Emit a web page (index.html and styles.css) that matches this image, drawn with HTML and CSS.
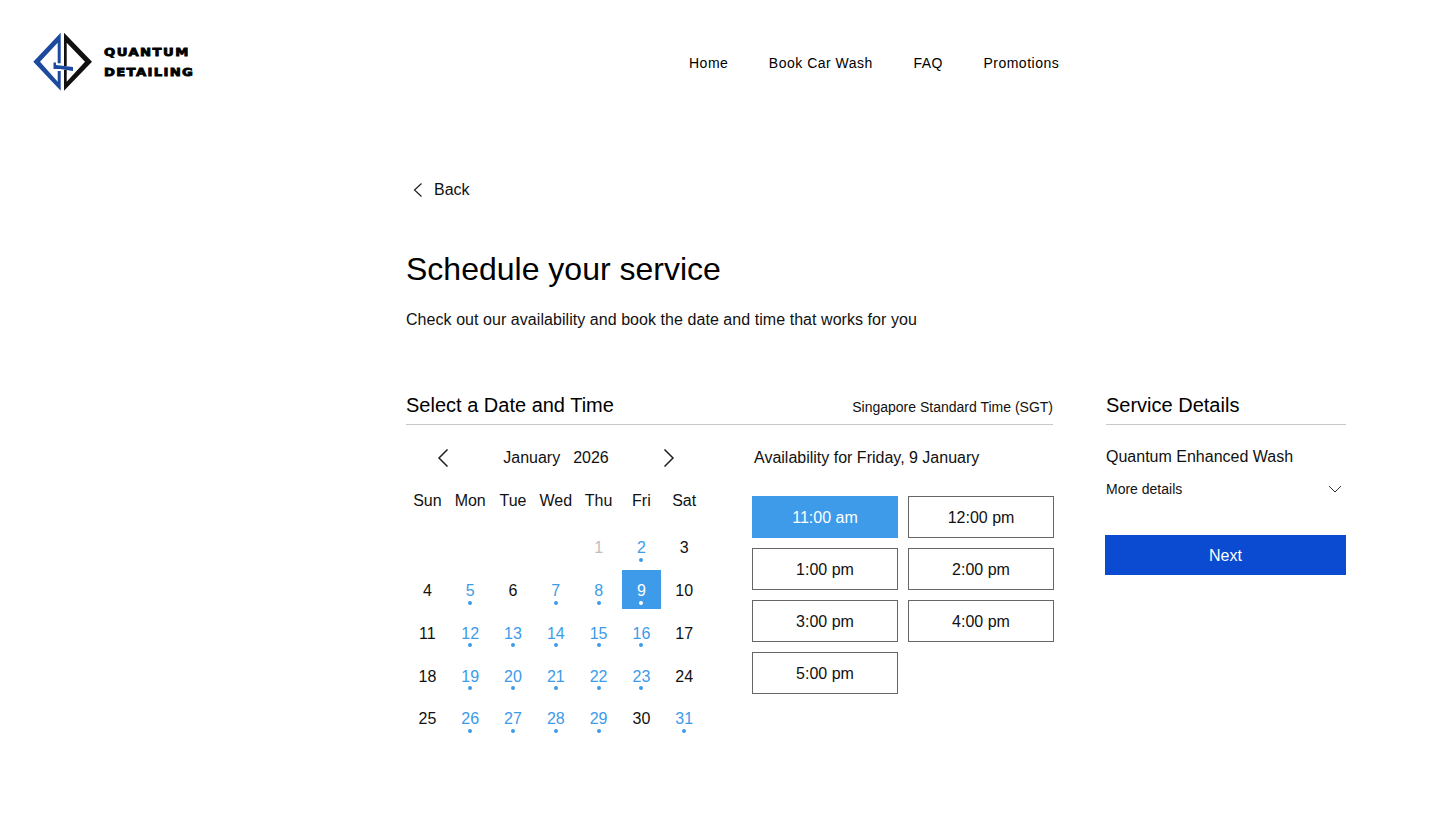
FILE: index.html
```html
<!DOCTYPE html>
<html lang="en">
<head>
<meta charset="utf-8">
<title>Schedule your service</title>
<link rel="stylesheet" href="styles.css">
</head>
<body>
<header class="site-header">
  <div class="logo">
    <svg class="logo-mark" width="60" height="60" viewBox="0 0 60 60">
      <path d="M27.7 .7 L.3 29.7 L27.7 58.7 V39 H24.7 V49.7 L7 29.7 L24.7 10.7 V31.3 H27.7 Z" fill="#1c4a9f"/>
      <path d="M31 .7 L59 29.7 L31 58.7 V38 H33.7 V49.7 L52 29.7 L33.7 10.7 V34 H31 Z" fill="#111"/>
      <path d="M20.5 30.5 H23 V33 L40 35 V39 L27 37 H20.5 Z" fill="#1c4a9f"/>
    </svg>
    <div class="logo-text"><span>QUANTUM</span><span>DETAILING</span></div>
  </div>
  <nav class="nav">
    <a>Home</a><a>Book Car Wash</a><a>FAQ</a><a>Promotions</a>
  </nav>
</header>
<main class="main">
  <a class="back">
    <svg width="10" height="14" viewBox="0 0 10 14"><path d="M8.5 .5 L1.5 7 L8.5 13.5" fill="none" stroke="#222" stroke-width="1.2"/></svg>
    <span>Back</span>
  </a>
  <h1 class="title">Schedule your service</h1>
  <p class="subtitle">Check out our availability and book the date and time that works for you</p>
  <div class="columns">
    <section class="picker">
      <div class="section-head">
        <h2>Select a Date and Time</h2>
        <span class="tz">Singapore Standard Time (SGT)</span>
      </div>
      <div class="picker-body">
        <div class="calendar">
          <div class="month-row">
            <svg width="12" height="18" viewBox="0 0 12 18"><path d="M10.5 .5 L2 9 L10.5 17.5" fill="none" stroke="#222" stroke-width="1.5"/></svg>
            <div class="month"><span>January</span><span>2026</span></div>
            <svg width="12" height="18" viewBox="0 0 12 18"><path d="M1.5 .5 L10 9 L1.5 17.5" fill="none" stroke="#222" stroke-width="1.5"/></svg>
          </div>
          <div class="grid">
            <div class="dow">Sun</div><div class="dow">Mon</div><div class="dow">Tue</div><div class="dow">Wed</div><div class="dow">Thu</div><div class="dow">Fri</div><div class="dow">Sat</div>
            <div class="day"></div><div class="day"></div><div class="day"></div><div class="day"></div>
            <div class="day off">1</div><div class="day on">2</div><div class="day">3</div>
            <div class="day">4</div><div class="day on">5</div><div class="day">6</div><div class="day on">7</div><div class="day on">8</div><div class="day on sel">9</div><div class="day">10</div>
            <div class="day">11</div><div class="day on">12</div><div class="day on">13</div><div class="day on">14</div><div class="day on">15</div><div class="day on">16</div><div class="day">17</div>
            <div class="day">18</div><div class="day on">19</div><div class="day on">20</div><div class="day on">21</div><div class="day on">22</div><div class="day on">23</div><div class="day">24</div>
            <div class="day">25</div><div class="day on">26</div><div class="day on">27</div><div class="day on">28</div><div class="day on">29</div><div class="day">30</div><div class="day on">31</div>
          </div>
        </div>
        <div class="slots">
          <div class="avail">Availability for Friday, 9 January</div>
          <div class="slot-grid">
            <button class="slot active">11:00 am</button>
            <button class="slot">12:00 pm</button>
            <button class="slot">1:00 pm</button>
            <button class="slot">2:00 pm</button>
            <button class="slot">3:00 pm</button>
            <button class="slot">4:00 pm</button>
            <button class="slot">5:00 pm</button>
          </div>
        </div>
      </div>
    </section>
    <aside class="details">
      <div class="section-head"><h2>Service Details</h2></div>
      <div class="service">Quantum Enhanced Wash</div>
      <div class="more"><span>More details</span>
        <svg width="14" height="8" viewBox="0 0 14 8"><path d="M1 1 L7 7 L13 1" fill="none" stroke="#333" stroke-width="1"/></svg>
      </div>
      <button class="next">Next</button>
    </aside>
  </div>
</main>
</body>
</html>
```
FILE: styles.css
```css
* { box-sizing: border-box; }
html, body { margin: 0; padding: 0; }
body { width: 1456px; height: 816px; overflow: hidden; background: #fff; color: #111; font-family: "Liberation Sans", Arial, sans-serif; font-weight: 400; }
.site-header { height: 125px; display: flex; padding: 32px 0 0 33px; }
.logo { display: flex; width: 656px; gap: 11px; height: 60px; align-items: center; }
.logo-text { display: flex; flex-direction: column; gap: 10px; margin-top: 1px; font: 700 11px/10px "DejaVu Sans", sans-serif; color: #000; -webkit-text-stroke: 0.8px #000; transform: scaleX(1.2); transform-origin: left center; }
.logo-text span:first-child { letter-spacing: 1.2px; }
.logo-text span:last-child { letter-spacing: 1.1px; }
.nav { display: flex; gap: 40.5px; height: 62px; align-items: center; font-size: 14px; letter-spacing: 0.5px; color: #000; }
.main { padding: 0 0 0 406px; }
.back { display: flex; align-items: center; gap: 11px; height: 20px; margin: 55px 0 0 7px; font-size: 16px; }
.title { margin: 48px 0 0; font-size: 32px; line-height: 42px; font-weight: 400; color: #000; }
.subtitle { margin: 18px 0 0; font-size: 16px; line-height: 24px; letter-spacing: 0.055px; }
.columns { display: flex; gap: 52px; margin-top: 59px; }
.picker { width: 647px; flex: none; }
.details { width: 241px; flex: none; }
.section-head { height: 34px; display: flex; justify-content: space-between; align-items: center; border-bottom: 1px solid #c8c8c8; padding-bottom: 5px; }
.details .section-head { margin-left: 1px; }
.section-head h2 { margin: 0; font-size: 20px; font-weight: 400; color: #000; }
.tz { font-size: 14px; padding-top: 4px; }
.picker-body { display: flex; }
.calendar { width: 346px; flex: none; }
.month-row { display: flex; align-items: center; justify-content: space-between; width: 300px; padding: 0 31px; height: 64px; margin-top: 1px; }
.month { display: flex; gap: 13px; font-size: 16px; }
.grid { display: grid; grid-template-columns: repeat(7, 42.8px); width: 300px; }
.dow { height: 35px; text-align: center; font-size: 16px; margin-top: 2px; }
.day { height: 42.75px; position: relative; display: flex; align-items: center; justify-content: center; font-size: 16px; }
.day.on { color: #3d9be9; }
.day.on::after { content: ""; position: absolute; left: 50%; bottom: 8px; width: 4px; height: 4px; margin-left: -2px; border-radius: 50%; background: #3d9be9; }
.day.off { color: #c4bcb8; }
.day.sel { color: #fff; background: linear-gradient(#3d9be9, #3d9be9) center 0 / 39px 39px no-repeat; }
.day.sel::after { background: #fff; }
.slots { flex: none; }
.avail { font-size: 16px; line-height: 64px; height: 64px; margin: 1px 0 0 2px; }
.slot-grid { display: grid; grid-template-columns: 146px 146px; gap: 10px; margin-top: 6px; }
.slot { height: 42px; background: #fff; border: 1px solid #666; font: 16px "Liberation Sans", Arial, sans-serif; color: #111; padding: 2px 0 0; }
.slot.active { background: #3d9be9; border-color: #3d9be9; color: #fff; }
.service { font-size: 16px; margin: 23px 0 0 1px; line-height: 18px; }
.more { display: flex; justify-content: space-between; align-items: center; font-size: 14px; margin: 15px 0 0 1px; padding-right: 4px; }
.next { width: 241px; height: 40px; margin-top: 38px; background: #0a4bd1; color: #fff; border: 0; font: 16px "Liberation Sans", Arial, sans-serif; padding: 2px 0 0; }
```
